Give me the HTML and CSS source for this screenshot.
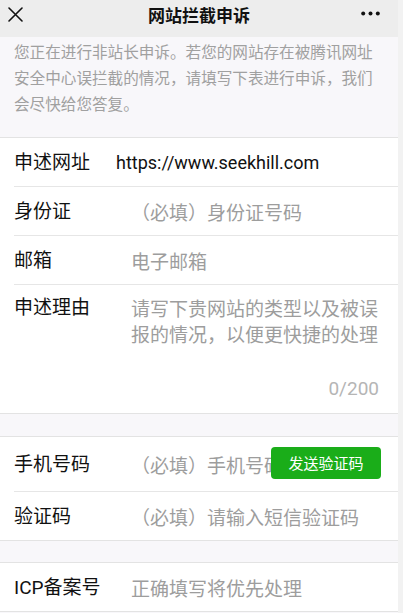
FILE: index.html
```html
<!DOCTYPE html>
<html lang="zh-CN">
<head>
<meta charset="utf-8">
<title>网站拦截申诉</title>
<link rel="stylesheet" href="styles.css">
</head>
<body>
<div class="page">
  <header class="topbar">
    <span class="close">
      <svg width="15" height="15" viewBox="0 0 15 15"><path d="M1 1 L14 14 M14 1 L1 14" stroke="#111" stroke-width="1.6" fill="none" stroke-linecap="round"/></svg>
    </span>
    <h1 class="title">网站拦截申诉</h1>
    <span class="more">
      <svg width="19" height="5" viewBox="0 0 19 5"><circle cx="2.2" cy="2.5" r="2" fill="#111"/><circle cx="9.5" cy="2.5" r="2" fill="#111"/><circle cx="16.8" cy="2.5" r="2" fill="#111"/></svg>
    </span>
  </header>

  <p class="intro">您正在进行非站长申诉。若您的网站存在被腾讯网址安全中心误拦截的情况，请填写下表进行申诉，我们会尽快给您答复。</p>

  <section class="group">
    <div class="row">
      <span class="label label-url">申述网址</span>
      <span class="value">https://www.seekhill.com</span>
    </div>
    <div class="row">
      <span class="label">身份证</span>
      <span class="ph">（必填）身份证号码</span>
    </div>
    <div class="row">
      <span class="label">邮箱</span>
      <span class="ph">电子邮箱</span>
    </div>
    <div class="row row-area">
      <span class="label">申述理由</span>
      <div class="area">
        <p class="ph area-text">请写下贵网站的类型以及被误报的情况，以便更快捷的处理</p>
        <span class="count">0/200</span>
      </div>
    </div>
  </section>

  <section class="group group-phone">
    <div class="row row-phone">
      <span class="label">手机号码</span>
      <span class="ph">（必填）手机号码</span>
      <span class="send-btn">发送验证码</span>
    </div>
    <div class="row">
      <span class="label">验证码</span>
      <span class="ph">（必填）请输入短信验证码</span>
    </div>
  </section>

  <section class="group group-icp">
    <div class="row">
      <span class="label">ICP备案号</span>
      <span class="ph">正确填写将优先处理</span>
    </div>
  </section>
</div>
</body>
</html>
```

FILE: styles.css
```css
* {
  box-sizing: border-box;
}

html, body {
  margin: 0;
  padding: 0;
}

body {
  background: #f2f2f2;
  font-family: Roboto, "Noto Sans CJK SC", sans-serif;
  color: #111;
  overflow: hidden;
}

.page {
  width: 398px;
  min-height: 613px;
  background: #f8f7fa;
}

.topbar {
  height: 37px;
  background: #ededed;
  display: grid;
  grid-template-columns: 60px 1fr 60px;
  align-items: center;
  padding-bottom: 9px;
}

.close {
  display: flex;
  padding-left: 8px;
}

.title {
  margin: 0;
  padding-top: 2px;
  text-align: center;
  font-family: "Noto Sans CJK SC", sans-serif;
  font-size: 17px;
  font-weight: bold;
  line-height: 24px;
  color: #111;
}

.more {
  display: flex;
  justify-content: flex-end;
  padding-right: 18px;
  padding-bottom: 2px;
}

.intro {
  margin: 0;
  padding: 1px 20px 21px 14px;
  font-family: "Noto Sans CJK SC", sans-serif;
  font-size: 15.6px;
  line-height: 26px;
  color: #a0a0a0;
}

.group {
  background: #fff;
  border-top: 1px solid #e3e3e3;
  border-bottom: 1px solid #e3e3e3;
}

.group-phone {
  margin-top: 22px;
}

.group-icp {
  margin-top: 21px;
}

.row {
  box-sizing: content-box;
  margin-left: 14px;
  padding-right: 17px;
  height: 48px;
  display: flex;
  align-items: center;
  font-size: 19px;
  line-height: 25px;
}

.row + .row {
  border-top: 1px solid #e6e6e6;
}

.label {
  flex: none;
  width: 117px;
  font-family: Roboto, "Noto Sans CJK SC", sans-serif;
  color: #111;
}

.label-url {
  width: 102px;
}

.value {
  font-family: Roboto, "Noto Sans CJK SC", sans-serif;
  font-size: 18px;
  color: #111;
}

.ph {
  font-family: "Noto Sans CJK SC", sans-serif;
  color: #9d9d9d;
  white-space: nowrap;
}

.row-area {
  height: 106px;
  align-items: stretch;
  padding-top: 10px;
  padding-bottom: 12px;
}

.area {
  flex: 1;
  display: flex;
  flex-direction: column;
  min-width: 0;
}

.area-text {
  margin: 0;
  white-space: normal;
  line-height: 25.5px;
}

.count {
  margin-top: auto;
  align-self: flex-end;
  margin-right: 2px;
  font-family: Roboto, sans-serif;
  font-size: 19px;
  color: #b5b5b5;
}

.row-phone {
  height: 54px;
  position: relative;
}

.send-btn {
  position: absolute;
  right: 17px;
  top: 10px;
  width: 110px;
  height: 32px;
  border-radius: 4px;
  background: #1aad19;
  color: #fff;
  font-family: "Noto Sans CJK SC", sans-serif;
  font-size: 15px;
  line-height: 32px;
  text-align: center;
}
```
